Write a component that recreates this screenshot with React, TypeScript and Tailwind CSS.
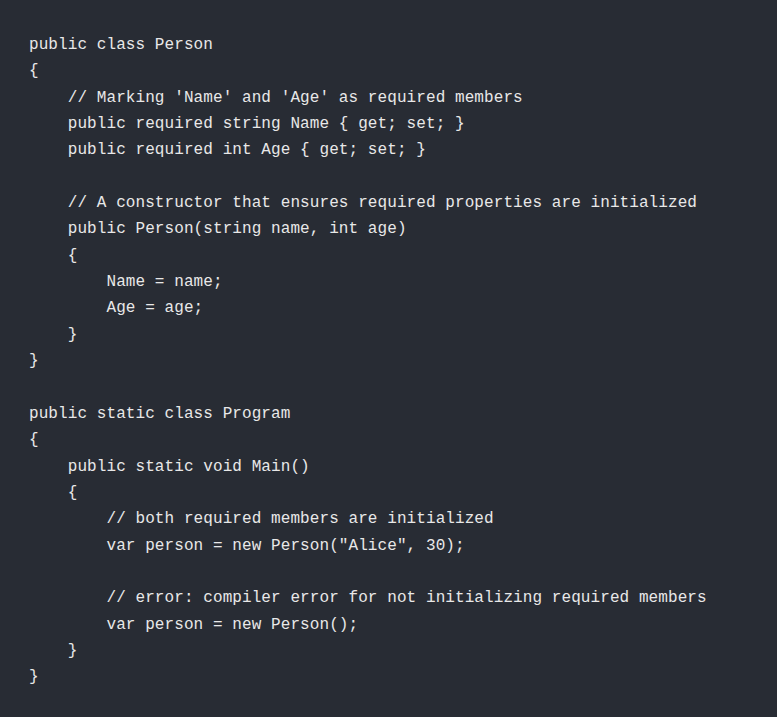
const code = `public class Person
{
    // Marking 'Name' and 'Age' as required members
    public required string Name { get; set; }
    public required int Age { get; set; }

    // A constructor that ensures required properties are initialized
    public Person(string name, int age)
    {
        Name = name;
        Age = age;
    }
}

public static class Program
{
    public static void Main()
    {
        // both required members are initialized
        var person = new Person("Alice", 30);

        // error: compiler error for not initializing required members
        var person = new Person();
    }
}`;

export default function App() {
  return (
    <div className="w-[777px] h-[717px] bg-[#282c34] overflow-hidden">
      <pre className="m-0 pl-[29px] pt-[32px] pb-[28px] text-[16px] leading-[26.35px] tracking-[0.08px] text-[#e8e8e8] font-['Liberation_Mono',monospace] whitespace-pre">
        {code}
      </pre>
    </div>
  );
}
